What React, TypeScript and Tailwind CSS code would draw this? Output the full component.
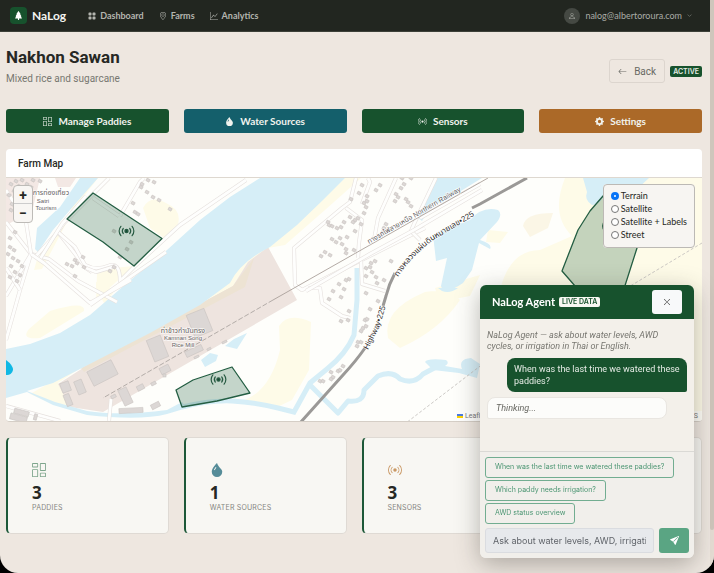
import { useState } from "react";
import type { ReactNode } from "react";
import {
    BsArrowLeft,
    BsBroadcast,
    BsChevronDown,
    BsColumnsGap,
    BsDropletFill,
    BsGearFill,
    BsGeoAlt,
    BsGraphUp,
    BsGridFill,
    BsPerson,
    BsSendFill,
    BsTreeFill,
    BsXLg,
} from "react-icons/bs";

const actions = [
    { label: "Manage Paddies", icon: <BsColumnsGap />, color: "bg-[#17522d]" },
    { label: "Water Sources", icon: <BsDropletFill />, color: "bg-[#145f6b]" },
    { label: "Sensors", icon: <BsBroadcast />, color: "bg-[#17522d]" },
    { label: "Settings", icon: <BsGearFill />, color: "bg-[#ab6928]" },
];

const stats = [
    { value: 3, label: "Paddies", icon: <BsColumnsGap />, color: "text-[#7ea68c]" },
    { value: 1, label: "Water Sources", icon: <BsDropletFill />, color: "text-[#568c98]" },
    { value: 3, label: "Sensors", icon: <BsBroadcast />, color: "text-[#c99864]" },
];

const layers = ["Terrain", "Satellite", "Satellite + Labels", "Street"];

const prompts = [
    "When was the last time we watered these paddies?",
    "Which paddy needs irrigation?",
    "AWD status overview",
];

// x, y, width, height, rotation
const buildings = [
    [190, 311, 19, 24, -22], [150, 337, 15, 23, -22], [89, 365, 27, 16, -27], [76, 380, 8, 14, -22],
    [61, 382, 9, 10, -20], [65, 394, 6, 12, -22], [121, 388, 9, 17, -25], [119, 408, 24, 5, -3],
    [151, 403, 9, 5, -27], [185, 348, 18, 6, -25], [137, 385, 7, 5, -27], [160, 366, 10, 7, -27],
    [111, 395, 5, 3, -27], [151, 382, 5, 3, -27], [163, 374, 3, 3, 0], [194, 356, 5, 2, -27],
    [207, 348, 4, 2, -27], [222, 341, 5, 2, -27], [14, 410, 15, 5, 15], [34, 414, 3, 6, 15], [10, 415, 17, 6, 15],
];

// centre points of small houses
const houses = [
    [142, 184], [148, 180], [154, 182], [141, 187], [147, 192], [153, 197], [159, 200], [170, 209], [133, 203],
    [135, 212], [138, 214], [114, 231], [131, 242], [127, 249], [83, 257], [75, 260], [67, 264], [72, 266], [77, 263],
    [84, 267], [75, 276], [114, 267], [110, 271], [120, 257], [362, 185], [359, 193], [367, 196], [351, 199], [376, 190],
    [380, 185], [358, 218], [355, 220], [364, 213], [366, 207], [353, 222], [361, 224], [364, 203], [367, 201],
    [328, 222], [332, 226], [337, 228], [341, 227], [329, 225], [344, 222], [350, 217], [355, 231], [347, 237],
    [332, 239], [336, 242], [342, 244], [346, 249], [340, 238], [354, 250], [346, 253], [325, 252], [330, 255],
    [321, 256], [402, 178], [404, 184], [401, 188], [396, 194], [398, 197], [395, 201], [408, 202], [411, 206],
    [406, 199], [411, 178], [386, 224], [384, 228], [389, 229], [383, 232], [371, 263], [375, 261], [370, 267],
    [366, 268], [372, 272], [366, 276], [376, 277], [391, 261], [384, 280], [377, 283], [366, 293], [349, 279],
    [346, 280], [339, 284], [333, 291], [341, 297], [344, 289], [329, 299], [365, 320], [370, 309], [363, 328],
    [367, 319], [361, 331], [366, 326], [358, 342], [361, 342], [357, 346], [349, 311], [341, 321], [348, 320],
    [320, 381], [323, 381], [331, 372], [333, 377], [331, 379], [338, 371], [343, 366], [340, 370], [378, 301],
    [11, 184], [16, 181], [22, 180], [19, 186], [27, 184], [33, 180], [31, 187], [40, 181], [14, 191], [9, 195],
    [24, 190], [10, 247], [14, 250], [8, 254], [13, 258], [18, 261], [22, 266], [11, 266], [15, 272], [20, 275],
    [10, 277], [17, 281], [12, 204], [11, 210], [15, 232], [10, 238],
];

const roads = [
    "M6 222 L31 254 L49 259 L78 281 L117 302 M31 254 L20 290 L6 340 M31 254 L6 296",
    "M92 272 L86 268 L58 232 L36 256 M58 232 L64 223 L109 178",
    "M58 232 L75 247 L85 265 Q96 271 108 266 T120 281 L134 267 L180 225 L246 180",
    "M40 259 L62 224 L86 196 M120 216 L140 182 L144 178 M93 198 L119 216",
    "M90 305 L166 252 M31 254 L44 263 L90 303 L131 280",
    "M6 190 L26 222 L31 254 M6 268 L20 290 M86 268 L96 272 L116 266",
    "M356 178 L350 202 L342 208 L294 248 L295 285 L302 290 L425 228",
    "M346 208 L362 220 L359 243 L358 258 M362 204 L370 182 L368 178",
    "M396 178 L378 218 L374 240 M436 178 L414 224 L411 231 L420 240",
    "M308 288 L320 288 L322 303 L342 316 L350 318 M361 260 L362 284 L385 291",
    "M420 218 L480 184 M306 291 L370 254 L414 230 L482 190",
    "M111 399 L109 421 M6 406 L60 421",
];

function SensorPin({ x, y }: { x: number; y: number }) {
    return (
        <g transform={`translate(${x} ${y})`} fill="none" stroke="#285b43" strokeWidth="1.2" strokeLinecap="round">
            <circle r="1.6" fill="#164c34" />
            <path d="M-3.2 -2.6 A4.2 4.2 0 0 0 -3.2 2.6 M3.2 -2.6 A4.2 4.2 0 0 1 3.2 2.6" />
            <path d="M-5.6 -4.7 A7.2 7.2 0 0 0 -5.6 4.7 M5.6 -4.7 A7.2 7.2 0 0 1 5.6 4.7" />
        </g>
    );
}

function MapCanvas() {
    return (
        <svg
            viewBox="6 178 696 243"
            preserveAspectRatio="xMidYMid slice"
            className="block h-[243px] w-full bg-[#fefefb] font-['Liberation_Sans','Noto_Sans_Thai',sans-serif]"
            role="img"
            aria-label="Farm map"
        >
            {/* fields */}
            <g fill="#fefbe8">
                <path d="M80 178 L98 178 L38 256 L34 270 L42 269 L68 220Z M143 208 Q150 194 166 203 Q182 210 178 224 L164 238 L150 228Z" />
                <path d="M29 329 Q20 340 40 338 L84 311 Q86 300 50 311Z M97 274 L113 268 L134 266 L96 300Z M96 282 L115 290 L105 305 L96 288Z" />
                <path d="M345 178 L361 178 L325 210 L285 245 L268 248Z M268 245 L78 367 L30 394 L55 405 L70 405 L58 383 L82 367 L234 287 L270 248Z" />
                <path d="M279 326 Q288 312 311 322 L309 370 L292 400 L273 409 L242 401 Q270 392 280 350Z" />
                <path d="M388 338 Q382 310 425 292 Q450 288 460 300 Q440 330 400 348Z M435 288 L480 275 L470 296 L440 302Z" />
                <path d="M565 178 L702 178 L702 421 L570 421 L500 290 Q510 250 540 250 L572 236 Q550 215 565 178Z M488 230 L508 232 L500 243 L486 242Z" />
            </g>
            <path d="M523 226 Q525 213 553 213 L548 228 L530 237Z" fill="#fbf6e6" />

            {/* rice mill grounds */}
            <path d="M268 247 L297 300 L103 412 L70 407 L58 384 L83 368 L233 286 L248 262Z" fill="#eee4df" />
            <path d="M233 286 L81 368 L84 372 L245 287 L254 258Z" fill="#ede3d3" />
            <path d="M55 178 H76 L70 187 H58Z M6 178 H40 L32 212 L6 225Z" fill="#f3e8e4" />

            {/* water */}
            <g fill="#d6eef7">
                <path d="M260 178 L230 197 L200 220 L167 250 L127 283 L90 315 L60 333 L30 344 L6 349 L6 398 L27 392 L53 405 L87 415 Q140 421 167 414 L187 408 L182 402 L167 410 Q120 416 87 411 L55 402 L27 391 L53 383 L80 369 L150 333 L200 305 L230 283 Q240 262 270 247 L297 225 L323 200 L345 178Z" />
                <path d="M80 178 H98 L70 210 L53 230 L38 252 L35 249 L37 228 L60 207Z" />
                <path d="M435 178 H482 L443 202 L432 204 L422 221 L417 217Z" />
                <path d="M498 210 Q482 206 470 220 L443 230 L433 235 L436 261 L447 258 L441 286 Q444 296 463 283 L472 270 L479 243 L490 249 Q493 244 480 240 L497 222 Q503 214 498 210Z" />
                <path d="M583 178 H649 L635 191 L607 190 Q600 206 592 205 Q584 200 587 192Z" />
                <path d="M201 360 L210 353 L218 355 L216 361 L205 367Z M225 346 L234 339 L247 333 L237 349Z M438 288 H458 Q450 294 442 291Z" />
                <path d="M425 362 Q427 358 446 360 Q450 363 445 366 L462 369 Q458 359 471 358 L480 364 L477 378 L459 373 L433 370Z" />
            </g>
            <g fill="none" stroke="#d6eef7" strokeWidth="5">
                <path d="M182 407 Q210 400 232 401 T278 408 L294 412 L310 383 L327 369 Q346 354 354 335 L357 300 V268" />
                <path d="M310 385 L338 413 L348 401 Q364 403 364 390 L378 376 Q392 370 400 379 Q414 385 423 374 L438 366" strokeLinejoin="round" />
            </g>

            {/* roads */}
            {roads.map((d) => (
                <g key={d} fill="none" strokeLinejoin="round">
                    <path d={d} stroke="#e6e1de" strokeWidth="4" />
                    <path d={d} stroke="#fefefd" strokeWidth="2.8" />
                </g>
            ))}
            <g fill="#dcd7d5" stroke="#cac5c2" strokeWidth="0.6">
                {buildings.map(([x, y, w, h, r]) => (
                    <rect key={`${x}-${y}`} x={x} y={y} width={w} height={h} transform={`rotate(${r} ${x + w / 2} ${y + h / 2})`} />
                ))}
                {houses.map(([x, y]) => (
                    <rect key={`${x}-${y}`} x={x - 1.6} y={y - 1.3} width="3.4" height="2.8" transform={`rotate(28 ${x} ${y})`} />
                ))}
            </g>
            <path d="M488 178 L273 300" fill="none" stroke="#aaa09b" strokeWidth="0.9" />
            <path d="M273 300 L103 398" fill="none" stroke="#a39d99" strokeWidth="0.8" strokeDasharray="5 2" />
            <path d="M702 243 L622 291 M505 347 L406 423" stroke="#c6c3c0" strokeWidth="0.9" strokeDasharray="3 2" />
            <path
                d="M300 423 L343 375 Q356 361 365 348 M383 306 L386 296 Q389 284 395 273 M472 208 L480 204 L527 178"
                fill="none"
                stroke="#9b9997"
                strokeWidth="3"
            />

            {/* paddies */}
            <g fill="#175a38" fillOpacity="0.25" stroke="#245e43" strokeWidth="1.3" strokeLinejoin="round">
                <path d="M93 193 L162 238.500 L134 266 L103 242 L67 219Z" />
                <path d="M232 367 L250 393 L217 401 L182 407 L176 390 L193 380Z" />
                <path d="M603 196 L625 206 L645 222 L637 248 L622 295 L595 309 L562 271 L578 230 L590 211Z" />
            </g>
            <SensorPin x={126.500} y={231} />
            <SensorPin x={218.500} y={379.500} />
            <SensorPin x={610} y={226} />
            <path d="M6 360 Q13 365 13 370 A6 6 0 0 1 6 375Z" fill="#10b8e4" />

            {/* place names */}
            <g fill="#66615f" fontSize="6" stroke="#fff" strokeWidth="1.5" strokeOpacity="0.7" paintOrder="stroke">
                <g textAnchor="middle">
                    <text x="51" y="195" fontSize="7">การท่องเที่ยว</text>
                    <text x="43" y="203">Satri</text>
                    <text x="46" y="210">Tourism</text>
                    <text x="183" y="333" fontSize="7">ท่าข้าวกำนันทรง</text>
                    <text x="183" y="340">Kamnan Song</text>
                    <text x="183" y="347">Rice Mill</text>
                </g>
                <path id="railway" d="M369 244 L480 180" fill="none" stroke="none" />
                <path id="highwayThai" d="M398 277 Q411 257 432 241 L482 211" fill="none" stroke="none" />
                <path id="highwayEn" d="M368 350 L379 328 L389 296" fill="none" stroke="none" />
                <text fontSize="7">
                    <textPath href="#railway">ทางรถไฟสายเหนือ Northern Railway</textPath>
                </text>
                <text fontSize="8" fill="#34302f">
                    <textPath href="#highwayThai">ทางหลวงแผ่นดินหมายเลข•225</textPath>
                </text>
                <text fontSize="8" fill="#34302f">
                    <textPath href="#highwayEn">Highway•225</textPath>
                </text>
            </g>
        </svg>
    );
}

function NavLink({ icon, label }: { icon: ReactNode; label: string }) {
    return (
        <a href="#" className="flex items-center gap-1 text-[9px] font-bold text-[#b4b5af]">
            <span className="text-[8px]">{icon}</span>
            {label}
        </a>
    );
}

function Navbar() {
    return (
        <header className="flex h-8 items-center border-b border-[#3c4038] bg-[#222620] px-[10px] font-['Lato',sans-serif]">
            <a href="#" className="flex items-center gap-[5px] text-[12px] font-bold text-[#f5f4f0]">
                <span className="flex size-[17px] items-center justify-center rounded-sm bg-[#17522d] text-[9px] text-white">
                    <BsTreeFill />
                </span>
                NaLog
            </a>
            <nav className="ml-[22px] flex gap-[15px]">
                <NavLink icon={<BsGridFill />} label="Dashboard" />
                <NavLink icon={<BsGeoAlt />} label="Farms" />
                <NavLink icon={<BsGraphUp />} label="Analytics" />
            </nav>
            <button type="button" className="mr-2 ml-auto flex items-center gap-[5px] text-[9px] text-[#aaaca6]">
                <span className="flex size-4 items-center justify-center rounded-full bg-[#454943] text-[8px]">
                    <BsPerson />
                </span>
                nalog@albertoroura.com
                <BsChevronDown className="size-[5px]" />
            </button>
        </header>
    );
}

function FarmMap() {
    const [layer, setLayer] = useState("Terrain");

    return (
        <section className="mt-4 overflow-hidden rounded-sm border-b border-[#d5cec6] bg-white">
            <h2 className="flex h-[29px] items-center border-b border-[#ded8d0] px-3 text-[10px] font-medium">Farm Map</h2>
            <div className="relative">
                <MapCanvas />
                <div className="absolute top-[7px] left-[7px] flex flex-col rounded-sm border border-[#bdbbb7] bg-[#f8f6f3] text-[14px] font-bold">
                    <button type="button" aria-label="Zoom in" className="h-[18px] w-[18px] border-b border-[#ccc] leading-4">+</button>
                    <button type="button" aria-label="Zoom out" className="h-[18px] w-[18px] leading-4">−</button>
                </div>
                <fieldset className="absolute top-[6px] right-[7px] rounded-[4px] border border-[#bcb9b5] bg-[#f7f5f2] px-[7px] pt-1 pb-[6px] font-['Lato',sans-serif] text-[9px]">
                    {layers.map((name) => (
                        <label key={name} className="flex h-[13px] items-center gap-[2px] whitespace-nowrap">
                            <input
                                type="radio"
                                name="layer"
                                checked={layer === name}
                                onChange={() => setLayer(name)}
                                className="size-2 appearance-none rounded-full border border-[#777] bg-white checked:border-3 checked:border-[#0874f7]"
                            />
                            {name}
                        </label>
                    ))}
                </fieldset>
                <div className="absolute right-0 bottom-0 flex w-[245px] items-center justify-between bg-white/70 pr-1 text-[7px] text-[#777]">
                    <a href="#" className="flex items-center gap-[2px]">
                        <svg viewBox="0 0 12 8" className="h-1 w-[6px]">
                            <path fill="#4c7be1" d="M0 0h12v4H0z" />
                            <path fill="#ffd500" d="M0 4h12v4H0z" />
                        </svg>
                        Leaflet
                    </a>
                    <span>S</span>
                </div>
            </div>
        </section>
    );
}

function AgentPanel() {
    return (
        <aside className="fixed right-5 bottom-[15px] w-[214px] overflow-hidden rounded-md bg-[#f3f0ea] shadow-[0_6px_24px_rgba(50,45,40,0.35)]">
            <div className="flex h-[34px] items-center bg-[#17522d] px-3">
                <h2 className="font-['Lato',sans-serif] text-[11px] font-bold text-white">NaLog Agent</h2>
                <span className="ml-1 rounded-xs bg-[#f7f7f2] px-[3px] font-['Inter',sans-serif] text-[7px] leading-[10px] font-semibold text-[#17522d]">LIVE DATA</span>
                <button type="button" aria-label="Close" className="ml-auto flex h-6 w-[30px] items-center justify-center rounded-[3px] bg-[#f8f9fa] text-[8px] text-[#333]">
                    <BsXLg />
                </button>
            </div>
            <div className="flex h-[132px] flex-col px-[7px] pt-[11px] text-[9px]">
                <p className="pr-6 leading-[11px] text-[#777670] italic">
                    NaLog Agent — ask about water levels, AWD cycles, or irrigation in Thai or English.
                </p>
                <p className="mt-[6px] ml-5 rounded-lg rounded-br-xs bg-[#17522d] px-[7px] py-[5px] leading-[12px] text-[#e5ebe5]">
                    When was the last time we watered these paddies?
                </p>
                <p className="mt-[5px] mr-5 rounded-lg rounded-bl-xs border border-[#e9e6e1] bg-[#fcfcfa] px-2 leading-5 text-[#666660] italic">
                    Thinking...
                </p>
            </div>
            <div className="border-t border-[#dad9d5] bg-[#f1efeb] px-[5px] py-[5px]">
                <div className="flex flex-col items-start gap-[2px]">
                    {prompts.map((prompt) => (
                        <button
                            key={prompt}
                            type="button"
                            className="h-[21px] rounded-[3px] border border-[#72ad91] px-[9px] font-['Inter',sans-serif] text-[7px] whitespace-nowrap text-[#4c9673]"
                        >
                            {prompt}
                        </button>
                    ))}
                </div>
                <form className="mt-1 flex gap-[5px]" onSubmit={(e) => e.preventDefault()}>
                    <input
                        type="text"
                        aria-label="Message"
                        placeholder="Ask about water levels, AWD, irrigation…"
                        className="h-[25px] min-w-0 flex-1 rounded-[3px] border border-[#dadce0] bg-[#e7e9ec] px-[7px] font-['Inter',sans-serif] text-[9px] placeholder:text-[#60646a]"
                    />
                    <button type="submit" aria-label="Send" className="flex h-[25px] w-[30px] items-center justify-center rounded-[3px] bg-[#5aa583] text-[9px] text-white">
                        <BsSendFill />
                    </button>
                </form>
            </div>
        </aside>
    );
}

export default function App() {
    return (
        <div className="min-h-screen bg-black font-['Roboto',sans-serif] text-[#262824]">
            <div className="flex min-h-screen overflow-hidden rounded-b-[18px] bg-[#eee7e0]">
                <div className="min-w-0 flex-1">
                    <Navbar />
                    <main className="pr-2 pl-[6px]">
                        <div className="flex items-center justify-between pt-[13px]">
                            <div>
                                <h1 className="text-[17px] leading-6 font-bold">Nakhon Sawan</h1>
                                <p className="mt-[2px] text-[10px] leading-4 text-[#777770]">Mixed rice and sugarcane</p>
                            </div>
                            <div className="mt-[10px] flex items-center gap-[5px]">
                                <a href="#" className="flex h-6 items-center gap-[7px] rounded-[3px] border border-[#dcd5ce] px-2 text-[10px] text-[#686963]">
                                    <BsArrowLeft className="size-[9px]" />
                                    Back
                                </a>
                                <span className="rounded-xs bg-[#17522d] px-[3px] font-['Inter',sans-serif] text-[7px] leading-[11px] font-semibold text-[#e5ece6]">ACTIVE</span>
                            </div>
                        </div>
                        <div className="mt-[22px] grid grid-cols-4 gap-[15px]">
                            {actions.map(({ label, icon, color }) => (
                                <button key={label} type="button" className={`flex h-6 items-center justify-center gap-[6px] rounded-[3px] font-['Lato',sans-serif] text-[10px] font-bold text-[#f1f3ee] ${color}`}>
                                    <span className="text-[9px]">{icon}</span>
                                    {label}
                                </button>
                            ))}
                        </div>
                        <FarmMap />
                        <div className="mt-[15px] grid grid-cols-4 gap-[15px]">
                            {stats.map(({ value, label, icon, color }) => (
                                <div key={label} className="h-[97px] rounded-[5px] border border-l-2 border-[#dfdad4] border-l-[#1d5838] bg-[#f8f7f3] px-6 pt-[25px]">
                                    <div className={`text-[14px] ${color}`}>{icon}</div>
                                    <div className="mt-[7px] font-['Noto_Sans',sans-serif] text-[17px] leading-[18px] font-bold">{value}</div>
                                    <div className="mt-[1px] font-['Inter',sans-serif] text-[7px] leading-[10px] tracking-wide text-[#85857f] uppercase">{label}</div>
                                </div>
                            ))}
                            <div className="h-[97px] rounded-[5px] border border-l-2 border-[#dfdad4] border-l-[#1d5838] bg-[#f8f7f3]" />
                        </div>
                    </main>
                </div>
                <div className="w-1 bg-[#e6ddd4]">
                    <div className="h-[530px] rounded-b-full bg-[#cfc6bc]" />
                </div>
            </div>
            <AgentPanel />
        </div>
    );
}
